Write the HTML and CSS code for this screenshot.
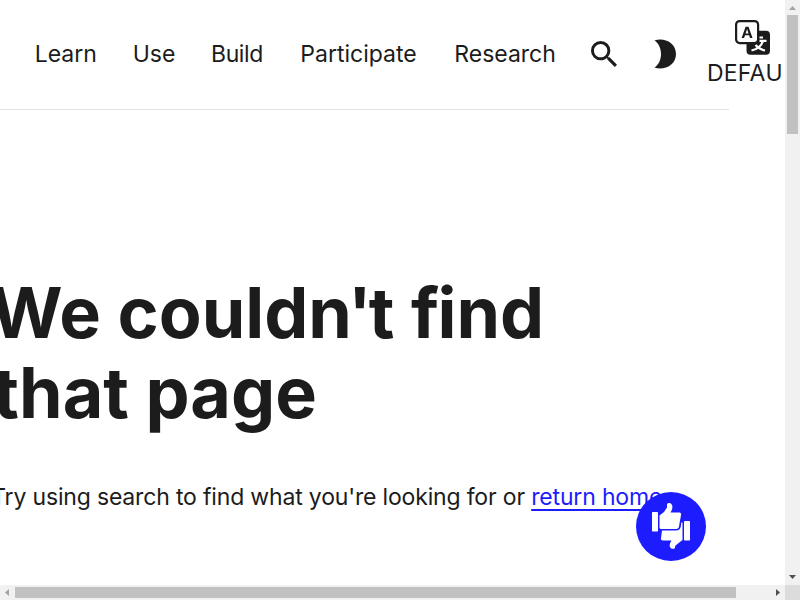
FILE: index.html
```html
<!DOCTYPE html>
<html lang="en">
<head>
<meta charset="utf-8">
<title>Page not found</title>
<link rel="stylesheet" href="styles.css">
</head>
<body>
<div class="window">
  <div class="page">
    <header class="header">
      <nav class="nav">
        <a>Learn</a><a>Use</a><a class="tight">Build</a><a>Participate</a><a>Research</a>
      </nav>
      <svg class="search" viewBox="3 3 17.49 17.49"><path d="M15.5 14h-.79l-.28-.27A6.471 6.471 0 0 0 16 9.5 6.5 6.5 0 1 0 9.5 16c1.61 0 3.09-.59 4.23-1.57l.27.28v.79l5 4.99L20.49 19l-4.99-5zm-6 0C7.01 14 5 11.99 5 9.5S7.01 5 9.5 5 14 7.01 14 9.5 11.99 14 9.5 14z"/></svg>
      <svg class="moon" viewBox="0 0 22 30"><path d="M.4 1.5C9.2-1.8 22 3 22 15S9.2 31.800 .4 28.500C9.200 23.500 9.200 6.500 .4 1.500z"/></svg>
      <div class="language">
        <svg class="translate" viewBox="0 0 36 36">
          <rect x="11.500" y="10.800" width="23.500" height="24" rx="4"/>
          <rect class="card" x="1.100" y="1.100" width="22" height="22" rx="3.500"/>
          <path d="M6.600 18 10.600 6.700h2.900L17.500 18h-2.500l-.9-2.700H10L9.100 18zm4-4.600h2.900l-1.450-4.300z"/>
          <path class="glyph" d="M24.500 17.500h3.500M24.500 20.800H31.500M28 20.800c-1.300 4.500-5 8.300-11.500 9.700M20.500 25c2.500 3 5.500 4.700 9.500 5.500"/>
        </svg>
        <span class="label">DEFA<span class="k4">U</span>LT</span>
      </div>
    </header>
    <main class="content">
      <h1>We could<span class="k1">n</span><span class="k2">'</span>t <span class="k3">f</span>ind<br><span class="second">that page</span></h1>
      <p>Try using search to find what you're looking for or <a class="link">return home</a>.</p>
    </main>
    <div class="feedback">
      <svg viewBox="0 3 40 48">
        <rect x="1" y="12" width="6" height="19.500" rx=".7"/>
        <rect x="33" y="21" width="6" height="19.500" rx=".7"/>
        <path d="M8.500 15.500 13 12l3-4.500V4.500C16 3 19.500 2 21 5c1 2.500 0 5-1.500 7.500H28c1.500 0 2.500 1 2 2.500L28 26.500c-.4 1.800-1.200 2.500-3 2.500H9.500l-1-1z"/>
        <path d="M11 30.500H25c3 0 4.300-1.200 4.800-4L30.500 22l1 1v17l-4.500 3.500c-2.500 1.800-3 2.500-3 4 0 1.700-4 2-5-.5-.8-2 0-4 1.500-6.500H12c-1.700 0-2.500-1-2-2.500z"/>
      </svg>
    </div>
  </div>
  <div class="bar vertical">
    <svg viewBox="0 0 15 15"><path class="dim" d="M4 10 7.500 6 11 10z"/></svg>
    <div class="thumb"></div>
    <svg class="last" viewBox="0 0 15 15"><path class="dark" d="M4 5H11L7.500 9z"/></svg>
  </div>
  <div class="bar horizontal">
    <svg viewBox="0 0 15 15"><path class="dim" d="M9 4V11L5 7.500z"/></svg>
    <div class="thumb"></div>
    <svg class="last" viewBox="0 0 15 15"><path class="dark" d="M6 4V11L10 7.500z"/></svg>
  </div>
  <div class="corner"></div>
</div>
</body>
</html>
```

FILE: styles.css
```css
* { box-sizing: border-box; }
body {
  margin: 0;
  overflow: hidden;
  background: #fff;
  color: #1c1c1c;
  font-family: Inter, sans-serif;
  font-size: 23px;
}
svg { display: block; fill: #1c1c1c; flex: none; }
.window {
  display: grid;
  grid-template: 585px 15px / 785px 15px;
  width: 800px;
  height: 600px;
}
.page { position: relative; overflow: hidden; }
.header {
  display: flex;
  align-items: center;
  width: 729px;
  height: 110px;
  padding: 0 0 2px 34.700px;
  border-bottom: 1px solid #e3e3e3;
  white-space: nowrap;
}
.nav {
  display: grid;
  grid-template-columns: 98px 78.300px 89.300px 154px auto;
  width: 556.300px;
  flex: none;
  line-height: 36px;
}
.tight { letter-spacing: -.4px; }
.search { width: 26px; height: 26px; }
.moon { width: 22px; height: 30px; margin-left: 37px; }
.language { flex: none; width: 92px; margin: 2px 0 0 31px; line-height: 34px; }
.translate { width: 36px; height: 36px; margin-left: 28px; }
.label { display: block; letter-spacing: .2px; }
.k4 { letter-spacing: 2.500px; }
.card { fill: #fff; stroke: #1c1c1c; stroke-width: 2.200; }
.glyph { fill: none; stroke: #fff; stroke-width: 2.200; }
.content { width: 729px; padding-top: 163px; }
h1 { margin: 0 0 0 -9.900px; font-size: 70px; font-weight: 700; line-height: 80px; white-space: nowrap; }
.k1 { letter-spacing: -4px; }
.k2 { letter-spacing: -2.800px; }
.k3 { letter-spacing: -1.500px; }
.second { margin-left: 3.200px; }
p { margin: 46px 0 0 -8.800px; line-height: 36px; letter-spacing: -.17px; white-space: nowrap; }
.link {
  color: #1c1cff;
  text-decoration: underline 2px;
  text-underline-offset: 4px;
  text-decoration-skip-ink: none;
}
.feedback {
  position: absolute;
  left: 636px;
  top: 492px;
  display: flex;
  align-items: center;
  justify-content: center;
  width: 70px;
  height: 69px;
  border-radius: 50%;
  background: #1c1cff;
}
.feedback svg { width: 40px; height: 48px; fill: #fff; overflow: visible; }
.bar { display: flex; background: #f1f1f1; }
.bar svg { width: 15px; height: 15px; }
.vertical { flex-direction: column; }
.vertical .thumb { width: 11px; height: 119px; margin-left: 2px; }
.horizontal .thumb { width: 721px; height: 11px; margin-top: 2px; }
.vertical .last { margin-top: auto; }
.horizontal .last { margin-left: auto; }
.thumb { background: #c1c1c1; }
.dim { fill: #a3a3a3; }
.dark { fill: #505050; }
.corner { background: #dcdcdc; }
```
